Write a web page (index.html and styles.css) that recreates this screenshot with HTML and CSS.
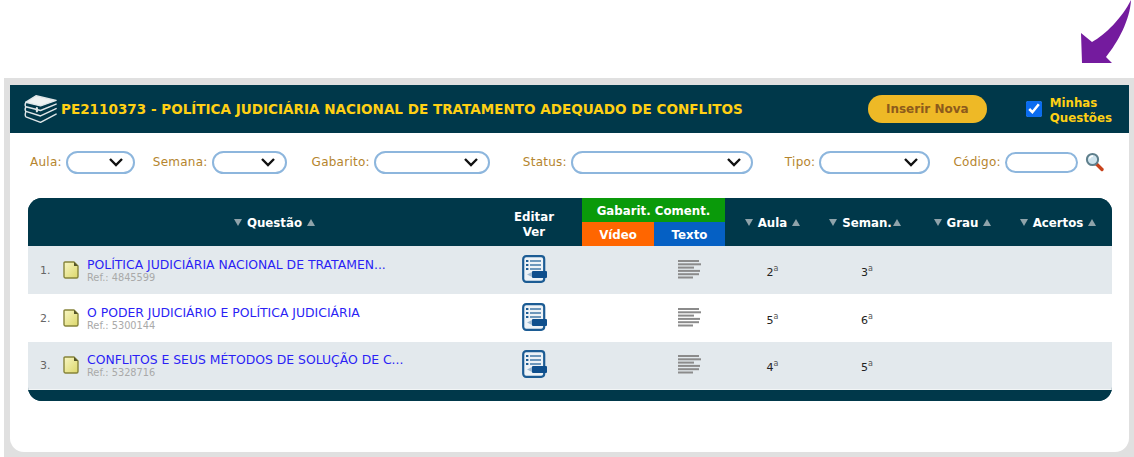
FILE: index.html
```html
<!DOCTYPE html>
<html lang="pt">
<head>
<meta charset="utf-8">
<title>Questões</title>
<link rel="stylesheet" href="styles.css">
</head>
<body>
<div class="top">
  <svg class="arrow" width="52" height="64" viewBox="0 0 52 64"><path d="M51 0C50 20 38 42 26 57L32 63L2 63L1 33L12 42C25 35 42 18 51 0Z" fill="#741b9e"/></svg>
</div>
<div class="frame">
 <div class="page">
  <header class="bar">
    <svg class="books" width="34" height="32" viewBox="0 0 37 35" fill="none" stroke="#dfe6e8" stroke-width="1.6" stroke-linejoin="round" stroke-linecap="round">
      <path d="M2 9L13 2L35 7L18 13Z" fill="#eef2f2"/>
      <path d="M2 9C1 11 1 13 2 14L18 18L35 11"/>
      <path d="M2 14C1 16 1 18 2 19L18 24L35 16"/>
      <path d="M2 19C1 22 1 24 2 25L18 31L35 22"/>
      <path d="M14 15.500V19" stroke-width="2.400"/>
    </svg>
    <h1 class="title">PE2110373 - POLÍTICA JUDICIÁRIA NACIONAL DE TRATAMENTO ADEQUADO DE CONFLITOS</h1>
    <button class="insert" type="button">Inserir Nova</button>
    <label class="mine"><input type="checkbox" checked><span>Minhas<br>Questões</span></label>
  </header>

  <form class="filters">
    <label class="filter f1">Aula: <select class="sel s1"><option></option></select></label>
    <label class="filter f2">Semana: <select class="sel s2"><option></option></select></label>
    <label class="filter f3">Gabarito: <select class="sel s3"><option></option></select></label>
    <label class="filter f4">Status: <select class="sel s4"><option></option></select></label>
    <label class="filter f5">Tipo: <select class="sel s5"><option></option></select></label>
    <label class="filter f6">Código: <input class="code" type="text"></label>
    <svg class="search" width="20" height="20" viewBox="0 0 20 20">
      <path d="M11.500 12L17 17.500" stroke="#c8431c" stroke-width="3.400" stroke-linecap="round"/>
      <circle cx="7.500" cy="7.500" r="5.600" fill="#cfe4ee" stroke="#5f7f8c" stroke-width="2"/>
      <path d="M4.500 6.500C5 5 6.500 4 8 4" stroke="#fff" stroke-width="1.400" fill="none"/>
    </svg>
  </form>

  <div class="tablewrap">
    <table class="grid">
      <colgroup>
        <col class="c-q"><col class="c-e"><col class="c-v"><col class="c-t"><col class="c-a"><col class="c-s"><col class="c-g"><col class="c-h">
      </colgroup>
      <thead>
        <tr>
          <th rowspan="2" class="th-q"><span class="down"></span>Questão<span class="up"></span></th>
          <th rowspan="2" class="th-e">Editar<br>Ver</th>
          <th colspan="2" class="th-green">Gabarit. Coment.</th>
          <th rowspan="2"><span class="down"></span>Aula<span class="up"></span></th>
          <th rowspan="2"><span class="down"></span>Seman.<span class="up tight"></span></th>
          <th rowspan="2" class="th-g"><span class="down"></span>Grau<span class="up"></span></th>
          <th rowspan="2" class="th-h"><span class="down"></span>Acertos<span class="up"></span></th>
        </tr>
        <tr>
          <th class="th-orange">Vídeo</th>
          <th class="th-blue">Texto</th>
        </tr>
      </thead>
      <tbody>
        <tr class="odd">
          <td><div class="q"><span class="num">1.</span><svg class="doc" width="16" height="18" viewBox="0 0 16 18"><use href="#doc"/></svg><div class="qt"><a href="#">POLÍTICA JUDICIÁRIA NACIONAL DE TRATAMEN...</a><small>Ref.: 4845599</small></div></div></td>
          <td class="edit"><svg width="26" height="28" viewBox="0 0 26 28"><use href="#edit"/></svg></td>
          <td></td>
          <td class="lines"><svg width="23" height="19" viewBox="0 0 23 19"><use href="#lines"/></svg></td>
          <td class="ord">2<sup>a</sup></td>
          <td class="ord">3<sup>a</sup></td>
          <td></td><td></td>
        </tr>
        <tr>
          <td><div class="q"><span class="num">2.</span><svg class="doc" width="16" height="18" viewBox="0 0 16 18"><use href="#doc"/></svg><div class="qt"><a href="#">O PODER JUDICIÁRIO E POLÍTICA JUDICIÁRIA</a><small>Ref.: 5300144</small></div></div></td>
          <td class="edit"><svg width="26" height="28" viewBox="0 0 26 28"><use href="#edit"/></svg></td>
          <td></td>
          <td class="lines"><svg width="23" height="19" viewBox="0 0 23 19"><use href="#lines"/></svg></td>
          <td class="ord">5<sup>a</sup></td>
          <td class="ord">6<sup>a</sup></td>
          <td></td><td></td>
        </tr>
        <tr class="odd">
          <td><div class="q"><span class="num">3.</span><svg class="doc" width="16" height="18" viewBox="0 0 16 18"><use href="#doc"/></svg><div class="qt"><a href="#">CONFLITOS E SEUS MÉTODOS DE SOLUÇÃO DE C...</a><small>Ref.: 5328716</small></div></div></td>
          <td class="edit"><svg width="26" height="28" viewBox="0 0 26 28"><use href="#edit"/></svg></td>
          <td></td>
          <td class="lines"><svg width="23" height="19" viewBox="0 0 23 19"><use href="#lines"/></svg></td>
          <td class="ord">4<sup>a</sup></td>
          <td class="ord">5<sup>a</sup></td>
          <td></td><td></td>
        </tr>
      </tbody>
    </table>
    <div class="tfoot"></div>
  </div>
 </div>
</div>

<svg class="defs" width="0" height="0">
  <defs>
    <linearGradient id="docfill" x1="0" y1="0" x2="1" y2="1"><stop offset="0" stop-color="#f8f6c4"/><stop offset="1" stop-color="#dcd76a"/></linearGradient>
    <g id="doc"><path d="M2 1H11L15 5V15.500A1.500 1.500 0 0 1 13.500 17H2.500A1.500 1.500 0 0 1 1 15.500V2A1 1 0 0 1 2 1Z" fill="url(#docfill)" stroke="#86843a" stroke-width="1.400" stroke-linejoin="round"/><path d="M11 1V5H15Z" fill="#55552a"/></g>
    <g id="edit">
      <rect x="1.200" y="1.200" width="21" height="25.600" rx="3" fill="#eef3f7" stroke="#1c5c94" stroke-width="2.200"/>
      <path d="M8 6H19M8 10H19M8 14H19" stroke="#6d97bb" stroke-width="1.800"/>
      <path d="M4 6H6.400M4 10H6.400M4 14H6.400" stroke="#1c5c94" stroke-width="1.800"/>
      <path d="M5 19.500L10 17V22Z" fill="#9fbbd3"/>
      <rect x="10" y="16" width="15" height="7" rx="1" fill="#0f4f8d"/>
    </g>
    <g id="lines" fill="#8b8b8b">
      <rect x="0" y="0" width="21" height="2"/><rect x="0" y="3.300" width="23" height="2"/>
      <rect x="0" y="6.600" width="16" height="2"/><rect x="0" y="9.900" width="22" height="2"/>
      <rect x="0" y="13.200" width="21" height="2"/><rect x="0" y="16.500" width="15" height="2"/>
    </g>
  </defs>
</svg>
</body>
</html>
```
FILE: styles.css
```css
* { box-sizing: border-box; }
html, body { margin: 0; padding: 0; background: #fff; }
body { width: 1134px; height: 457px; overflow: hidden; font-family: "DejaVu Sans", Verdana, sans-serif; }

.top { height: 78px; display: flex; justify-content: flex-end; align-items: flex-start; padding-right: 2px; }
.arrow { display: block; }

.frame {
  margin-left: 4px;
  width: 1130px;
  height: 379px;
  padding: 7px 5px 5px 6px;
  background: #e0e0e0;
}
.page {
  height: 100%;
  background: #fff;
  border-radius: 0 0 14px 14px;
}

.bar {
  height: 48px;
  background: #00384a;
  display: flex;
  align-items: center;
  padding: 0 17px 0 14px;
}
.books { flex: none; margin: 1px 3px 0 0; }
.title {
  margin: 0;
  flex: 1;
  font-size: 13.55px;
  font-weight: 700;
  color: #ffd014;
  white-space: nowrap;
}
.insert {
  flex: none;
  width: 119px;
  height: 28px;
  margin-right: 39px;
  border: none;
  border-radius: 14px;
  background: #eeb926;
  color: #8c5a1c;
  font: 700 12px "DejaVu Sans", Verdana, sans-serif;
}
.mine {
  flex: none;
  display: flex;
  align-items: center;
  gap: 8px;
  color: #ffd014;
  font-size: 11.8px;
  font-weight: 700;
  line-height: 15px;
}
.mine span { margin-top: 4px; }
.mine input { width: 16px; height: 16px; margin: 0; accent-color: #0a6cf0; }

.filters {
  height: 65px;
  display: flex;
  align-items: center;
  padding: 0 0 7px 20px;
}
.filter {
  display: flex;
  align-items: center;
  gap: 4px;
  color: #b5852e;
  font-size: 12px;
  letter-spacing: 0.25px;
  white-space: nowrap;
}
.f2 { margin-left: 18px; }
.f3 { margin-left: 25px; }
.f4 { margin-left: 33px; }
.f5 { margin-left: 32px; }
.f6 { margin-left: 23px; }
.sel {
  height: 23px;
  border: 2px solid #8db6dd;
  border-radius: 12px;
  appearance: none;
  background: #fff url("data:image/svg+xml,%3Csvg xmlns='http://www.w3.org/2000/svg' width='16' height='10'%3E%3Cpath d='M2 2L8 8L14 2' fill='none' stroke='%23111' stroke-width='2.400'/%3E%3C/svg%3E") no-repeat right 9px center;
}
.s1 { width: 69px; }
.s2 { width: 75px; }
.s3 { width: 116px; }
.s4 { width: 182px; }
.s5 { width: 111px; }
.code {
  width: 73px;
  height: 21px;
  border: 2px solid #8db6dd;
  border-radius: 11px;
  background: #fff;
}
.search { margin-left: 7px; flex: none; }

.tablewrap {
  width: 1084px;
  margin-left: 18px;
  border-radius: 14px;
  overflow: hidden;
  background: #00384a;
}
.grid {
  width: 1084px;
  table-layout: fixed;
  border-collapse: collapse;
}
.c-q { width: 458px; }
.c-e { width: 96px; }
.c-v { width: 72px; }
.c-t { width: 71px; }
.c-a { width: 95px; }
.c-s { width: 90px; }
.c-g { width: 102px; }
.c-h { width: 100px; }

thead th {
  height: 24px;
  padding: 2px 0 0;
  background: #00384a;
  color: #fff;
  font-size: 11.8px;
  font-weight: 700;
  text-align: center;
  white-space: nowrap;
  line-height: 15px;
}
thead th.th-q { padding-left: 35px; }
thead th.th-e { padding-top: 6px; }
thead th.th-g { padding-left: 3px; }
thead th.th-h { padding-right: 8px; }
thead .th-green { background: #0a9a0a; }
thead .th-orange { background: #ff6600; padding-top: 3px; }
thead .th-blue { background: #0560c4; padding-top: 3px; }

.down, .up {
  display: inline-block;
  width: 0;
  height: 0;
  border-left: 4.5px solid transparent;
  border-right: 4.5px solid transparent;
  vertical-align: 1px;
}
.down { border-top: 7px solid #8fa3aa; margin-right: 5px; }
.up { border-bottom: 7px solid #8fa3aa; margin-left: 5px; }
.up.tight { margin-left: 1px; }

tbody tr { height: 48px; background: #fff; }
tbody tr.odd { background: #e3e9ed; }
tbody tr:last-child { height: 47px; }
tbody td { padding: 0; text-align: center; vertical-align: middle; }
tbody tr:last-child td { border-bottom: 1px solid #f2f5f6; }
.q { display: flex; align-items: center; text-align: left; padding-left: 12px; }
.num { width: 23px; flex: none; font-size: 11px; color: #666; }
.doc { flex: none; margin-right: 8px; }
.qt { display: flex; flex-direction: column; }
.qt a { color: #2b1ff5; text-decoration: none; font-size: 12.4px; line-height: 14px; white-space: nowrap; }
.qt small { color: #a9a9a9; font-size: 9.8px; line-height: 11px; }
.edit svg, .lines svg { display: block; margin: 0 auto; }
tbody td.edit { padding: 0 0 3px 2px; }
tbody td.lines { padding-bottom: 2px; }
.ord { font-size: 11px; color: #222; }
tbody td.ord { padding-top: 5px; }
tbody td.ord + td.ord { padding-left: 4px; }
.ord sup { font-size: 8px; color: #555; line-height: 0; }

.tfoot { height: 11px; background: #00384a; }
.defs { position: absolute; }
```
